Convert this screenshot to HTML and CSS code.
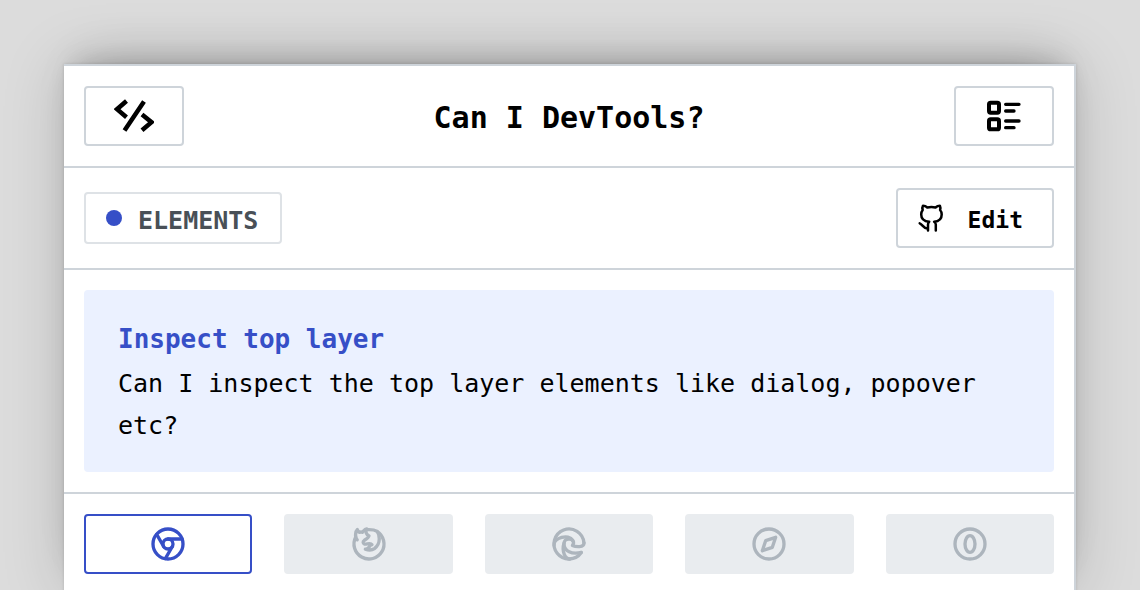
FILE: index.html
```html
<!DOCTYPE html>
<html lang="en">
<head>
<meta charset="utf-8">
<meta name="viewport" content="width=device-width, initial-scale=1">
<title>Can I DevTools?</title>
<link rel="stylesheet" href="styles.css">
</head>
<body>
<main class="card">
  <header class="row header">
    <button class="button button-icon" type="button" aria-label="Home">
      <svg class="icon icon-code" viewBox="0 0 40 40" aria-hidden="true"><path d="M12.500 5 3 13.200l9.500 8M30 5.500 10.500 34.500M28 18.500l9.500 7.700-9.500 8"/></svg>
    </button>
    <h1 class="title">Can I DevTools?</h1>
    <button class="button button-icon" type="button" aria-label="Feature list">
      <svg class="icon" viewBox="0 0 24 24" aria-hidden="true"><path d="M13 5h8M13 9h5M13 15h8M13 19h5"/><g stroke-width="2.400"><rect x="3" y="4" width="6" height="6" rx="1"/><rect x="3" y="14" width="6" height="6" rx="1"/></g></svg>
    </button>
  </header>

  <div class="row">
    <span class="tag"><span class="dot"></span><span class="label">ELEMENTS</span></span>
    <a class="button edit" href="#edit">
      <svg class="icon-github" viewBox="0 0 28 28" aria-hidden="true"><path d="M10 26.500V20.500c0-1.200.3-2 1.200-2.800C6 17.300 3.200 14.600 3.200 10.500c0-2 .6-3.400 1.500-4.500C4.200 4.500 4.300 3 5 1.700c1.700 0 3.200.8 4.300 1.800 2.500-.6 5.700-.6 8.200 0 1.100-1 2.700-1.800 4.400-1.800.6 1.300.7 2.800.2 4.300 1 1.100 1.600 2.500 1.600 4.500 0 4.100-2.600 6.800-7.600 7.200 1.200.8 1.700 1.600 1.700 2.800v6M10 24.800C5 24.500 4.800 20.500 1.700 19.300"/></svg>
      <span class="label">Edit</span>
    </a>
  </div>

  <section class="summary">
    <div class="feature">
      <h2 class="feature-title">Inspect top layer</h2>
      <p class="feature-text">Can I inspect the top layer elements like dialog, popover etc?</p>
    </div>
  </section>

  <nav class="browsers" aria-label="Browsers">
    <button class="browser browser-active" type="button" aria-label="Chrome">
      <svg class="icon" viewBox="0 0 24 24" aria-hidden="true"><circle cx="12" cy="12" r="9"/><circle cx="12" cy="12" r="3"/><path d="M12 9h8.400M14.598 13.500l-4.200 7.275M9.402 13.500l-4.200-7.275"/></svg>
    </button>
    <button class="browser" type="button" aria-label="Firefox">
      <svg class="icon" viewBox="0 0 24 24" aria-hidden="true"><path d="M4.028 7.820a9 9 0 1 0 12.823-3.400c-1.636-1.020-3.064-1.020-4.851-1.020h-1.647"/><path d="M4.914 9.485c-1.756-1.569-.805-5.380.109-6.170.086.896.585 1.208 1.111 1.685.880-.275 1.313-.282 1.867 0 .820-.910 1.694-2.354 2.628-2.093-1.082 1.741-.070 3.733 1.371 4.173-.170.975-1.484 1.913-2.760 2.686-1.296.938-.722 1.850 0 2.234.949.506 3.611-.995 4.545.354-1.698.102-1.536 3.107-3.983 2.727 2.523.957 4.345.462 5.458-.340 1.965-1.520 2.879-3.542 2.879-5.557-.014-1.398.194-2.695-1.260-4.750"/></svg>
    </button>
    <button class="browser" type="button" aria-label="Edge">
      <svg class="icon" viewBox="0 0 24 24" aria-hidden="true"><path d="M20.978 11.372a9 9 0 1 0-1.593 5.773"/><path d="M20.978 11.372c.210 2.993-5.034 2.413-6.913 1.486 1.392-1.600.402-4.038-2.274-3.851-1.745.122-2.927 1.157-2.784 3.202.280 3.990 4.444 6.205 10.360 4.790"/><path d="M3.022 12.628c-.283-4.043 8.717-7.228 11.248-2.688M12.628 20.978c-2.993.210-5.162-4.725-3.567-9.748"/></svg>
    </button>
    <button class="browser" type="button" aria-label="Safari">
      <svg class="icon" viewBox="0 0 24 24" aria-hidden="true"><path d="M8 16l2-6 6-2-2 6-6 2"/><circle cx="12" cy="12" r="9"/></svg>
    </button>
    <button class="browser" type="button" aria-label="Opera">
      <svg class="icon" viewBox="0 0 24 24" aria-hidden="true"><circle cx="12" cy="12" r="9"/><ellipse cx="12" cy="12" rx="3" ry="5"/></svg>
    </button>
  </nav>
</main>
</body>
</html>
```

FILE: styles.css
```css
* {
  box-sizing: border-box;
}

body {
  margin: 0;
  padding: 64px 64px 0;
  min-height: 100vh;
  display: flex;
  overflow: hidden;
  background: #dcdcdc;
  color: #000;
  font-family: "DejaVu Sans Mono", monospace;
  font-size: 25px;
}

.card {
  flex: 1;
  min-width: 0;
  background: #fff;
  border-top: 2px solid #ced4da;
  border-right: 2px solid #ced4da;
  box-shadow:
    0 0 3px rgba(0, 0, 0, 0.14),
    0 -12px 24px -12px rgba(0, 0, 0, 0.16),
    0 -24px 48px -24px rgba(0, 0, 0, 0.16),
    0 0 60px rgba(0, 0, 0, 0.16);
}

.row {
  display: flex;
  align-items: center;
  justify-content: space-between;
  padding: 20px;
  border-bottom: 2px solid #ced4da;
}

.title {
  margin: 0;
  padding-top: 4px;
  font-size: 30px;
  line-height: 40px;
}

.button {
  display: flex;
  align-items: center;
  justify-content: center;
  height: 60px;
  border: 2px solid #ced4da;
  border-radius: 4px;
  background: #fff;
  color: inherit;
  font-weight: 700;
  text-decoration: none;
}

.button-icon {
  width: 100px;
  padding: 0;
}

.icon {
  width: 40px;
  height: 40px;
  fill: none;
  stroke: currentColor;
  stroke-width: 2;
  stroke-linecap: round;
  stroke-linejoin: round;
}

.icon-code {
  stroke-width: 4.5;
  stroke-linecap: butt;
  stroke-linejoin: miter;
}

.edit {
  gap: 22px;
  padding: 0 29px 0 20px;
  font-size: 23px;
}

.icon-github {
  width: 28px;
  height: 28px;
  fill: none;
  stroke: currentColor;
  stroke-width: 2.5;
  stroke-linecap: round;
  stroke-linejoin: round;
}

.tag {
  display: flex;
  align-items: center;
  gap: 16px;
  height: 52px;
  padding: 0 22px 0 20px;
  border: 2px solid #dee2e6;
  border-radius: 4px;
  color: #495057;
  font-weight: 700;
}

.label {
  padding-top: 4px;
}

.dot {
  width: 16px;
  height: 16px;
  border-radius: 50%;
  background: #364fc7;
}

.summary {
  padding: 20px;
  border-bottom: 2px solid #ced4da;
}

.feature {
  padding: 29px 34px 25px;
  border-radius: 4px;
  background: #ebf1ff;
}

.feature-title {
  margin: 0 0 4px;
  color: #364fc7;
  font-size: 26px;
  line-height: 40px;
}

.feature-text {
  margin: 0;
  line-height: 42px;
}

.browsers {
  display: grid;
  grid-template-columns: repeat(5, 1fr);
  gap: 32px;
  padding: 20px;
}

.browser {
  display: flex;
  align-items: center;
  justify-content: center;
  height: 60px;
  padding: 0;
  border: 2px solid #e9ecef;
  border-radius: 4px;
  background: #e9ecef;
  color: #adb5bd;
}

.browser-active {
  border-color: #364fc7;
  background: #fff;
  color: #364fc7;
}
```
